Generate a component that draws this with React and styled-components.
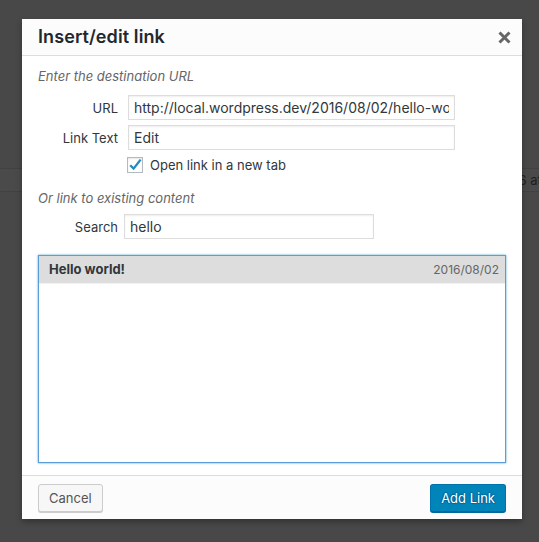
import React from "react";
import styled, { createGlobalStyle } from "styled-components";

const font = `Inter, "Liberation Sans", Arial, sans-serif`;

const GlobalStyle = createGlobalStyle`
  html, body {
    margin: 0;
    padding: 0;
    overflow: hidden;
  }
  body {
    background: #484848;
    font-family: ${font};
    font-size: 13px;
    color: #32373c;
  }
`;

const Screen = styled.div`
  position: relative;
  width: 539px;
  height: 542px;
  overflow: hidden;
`;

// page content dimmed behind the backdrop
const PageBand = styled.div`
  margin-top: 168px;
  height: 22px;
  border-top: 1px solid #414141;
  border-bottom: 1px solid #414141;
  background: #4a4a4a;
  padding-left: 497px;
  line-height: 22px;
  font-size: 13px;
  color: #1f1f1f;
  white-space: nowrap;
  overflow: hidden;
`;

const Dialog = styled.div`
  position: absolute;
  left: 22px;
  top: 19px;
  width: 500px;
  height: 500px;
  background: #fff;
  box-shadow: 0 3px 6px rgba(0, 0, 0, 0.3);
  display: flex;
  flex-direction: column;
`;

const Header = styled.div`
  height: 36px;
  flex-shrink: 0;
  background: #fcfcfc;
  border-bottom: 1px solid #ddd;
  display: flex;
  align-items: center;
  justify-content: space-between;
  padding-left: 16px;
`;

const Title = styled.h1`
  margin: 0;
  font-size: 18px;
  font-weight: 600;
  letter-spacing: 0.1px;
  color: #23282d;
  line-height: 36px;
`;

const CloseButton = styled.button`
  width: 36px;
  height: 36px;
  border: 0;
  padding: 0;
  background: none;
  display: flex;
  align-items: center;
  justify-content: center;
`;

const Body = styled.div`
  flex: 1;
  min-height: 0;
  display: flex;
  flex-direction: column;
  padding: 8px 16px 12px;
`;

const Howto = styled.p`
  margin: ${(p) => p.$margin || "3px 0"};
  font-style: italic;
  color: #666;
  font-size: 13px;
  line-height: 18px;
`;

const Field = styled.label`
  display: flex;
  align-items: center;
  margin-top: ${(p) => p.$top}px;
`;

const FieldLabel = styled.span`
  width: 80px;
  text-align: right;
  font-size: 13px;
  color: #32373c;
`;

const TextInput = styled.input`
  box-sizing: border-box;
  width: ${(p) => p.$width}px;
  height: 25px;
  margin: 0 0 0 ${(p) => p.$gap}px;
  padding: 3px 5px;
  border: 1px solid #ddd;
  box-shadow: inset 0 1px 2px rgba(0, 0, 0, 0.07);
  background: #fff;
  color: #32373c;
  font-family: ${font};
  font-size: 14px;
  outline: none;
`;

const TargetRow = styled.label`
  display: flex;
  align-items: center;
  gap: 7px;
  margin-top: 6px;
  padding-left: 89px;
  line-height: 18px;
  font-size: 13px;
  color: #32373c;
`;

const CheckBox = styled.span`
  box-sizing: border-box;
  width: 16px;
  height: 16px;
  border: 1px solid #b4b9be;
  background: #fff;
  box-shadow: inset 0 1px 2px rgba(0, 0, 0, 0.1);
  display: flex;
  align-items: center;
  justify-content: center;
`;

const Results = styled.div`
  flex: 1;
  margin-top: 16px;
  border: 1px solid #5b9dd9;
  box-shadow: 0 0 2px rgba(30, 140, 190, 0.8);
  background: #fff;
  overflow: hidden;
`;

const ResultItem = styled.div`
  display: flex;
  align-items: baseline;
  justify-content: space-between;
  padding: 4px 6px 4px 10px;
  line-height: 18px;
  border-bottom: 1px solid #f1f1f1;
  background: ${(p) => (p.$selected ? "#ddd" : "#fff")};
  color: #32373c;
`;

const ItemTitle = styled.span`
  font-weight: ${(p) => (p.$selected ? 700 : 400)};
  font-size: 13px;
`;

const ItemInfo = styled.span`
  font-size: 12px;
  color: #666;
`;

const Footer = styled.div`
  flex-shrink: 0;
  background: #fcfcfc;
  border-top: 1px solid #ddd;
  padding: 8px 16px 7px;
  display: flex;
  justify-content: space-between;
`;

const Button = styled.button`
  box-sizing: border-box;
  height: 28px;
  padding: 0 10px 1px;
  border-radius: 3px;
  border: 1px solid ${(p) => (p.$primary ? "#0073aa" : "#ccc")};
  border-bottom-color: ${(p) => (p.$primary ? "#006799" : "#ccc")};
  background: ${(p) => (p.$primary ? "#0085ba" : "#f7f7f7")};
  box-shadow: 0 1px 0 ${(p) => (p.$primary ? "#006799" : "#ccc")};
  color: ${(p) => (p.$primary ? "#fff" : "#555")};
  text-shadow: ${(p) =>
    p.$primary
      ? "0 -1px 1px #006799, 1px 0 1px #006799, 0 1px 1px #006799, -1px 0 1px #006799"
      : "none"};
  font-family: ${font};
  font-size: 13px;
  line-height: 26px;
`;

function CloseIcon() {
  return (
    <svg width="13" height="13" viewBox="0 0 13 13">
      <path d="M1.5 1.5 L11.5 11.5 M11.5 1.5 L1.5 11.5" stroke="#666" strokeWidth="3" />
    </svg>
  );
}

function CheckIcon() {
  return (
    <svg width="16" height="16" viewBox="0 0 16 16" style={{ overflow: "visible" }}>
      <path d="M3.2 8.2 L6.6 11.6 L13.6 2.6" stroke="#1e8cbe" strokeWidth="2.3" fill="none" />
    </svg>
  );
}

export default function App() {
  return (
    <Screen>
      <GlobalStyle />
      <PageBand>2016 at 10:31 am</PageBand>
      <Dialog>
        <Header>
          <Title>Insert/edit link</Title>
          <CloseButton aria-label="Close">
            <CloseIcon />
          </CloseButton>
        </Header>
        <Body>
          <Howto>Enter the destination URL</Howto>
          <Field $top={7}>
            <FieldLabel>URL</FieldLabel>
            <TextInput
              $width={327}
              $gap={10}
              readOnly
              value="http://local.wordpress.dev/2016/08/02/hello-world/"
            />
          </Field>
          <Field $top={5}>
            <FieldLabel>Link Text</FieldLabel>
            <TextInput $width={327} $gap={10} readOnly value="Edit" />
          </Field>
          <TargetRow>
            <CheckBox>
              <CheckIcon />
            </CheckBox>
            Open link in a new tab
          </TargetRow>
          <Howto $margin="15px 0 3px">Or link to existing content</Howto>
          <Field $top={4}>
            <FieldLabel>Search</FieldLabel>
            <TextInput $width={250} $gap={6} readOnly value="hello" />
          </Field>
          <Results>
            <ResultItem $selected>
              <ItemTitle $selected>Hello world!</ItemTitle>
              <ItemInfo>2016/08/02</ItemInfo>
            </ResultItem>
          </Results>
        </Body>
        <Footer>
          <Button>Cancel</Button>
          <Button $primary>Add Link</Button>
        </Footer>
      </Dialog>
    </Screen>
  );
}
